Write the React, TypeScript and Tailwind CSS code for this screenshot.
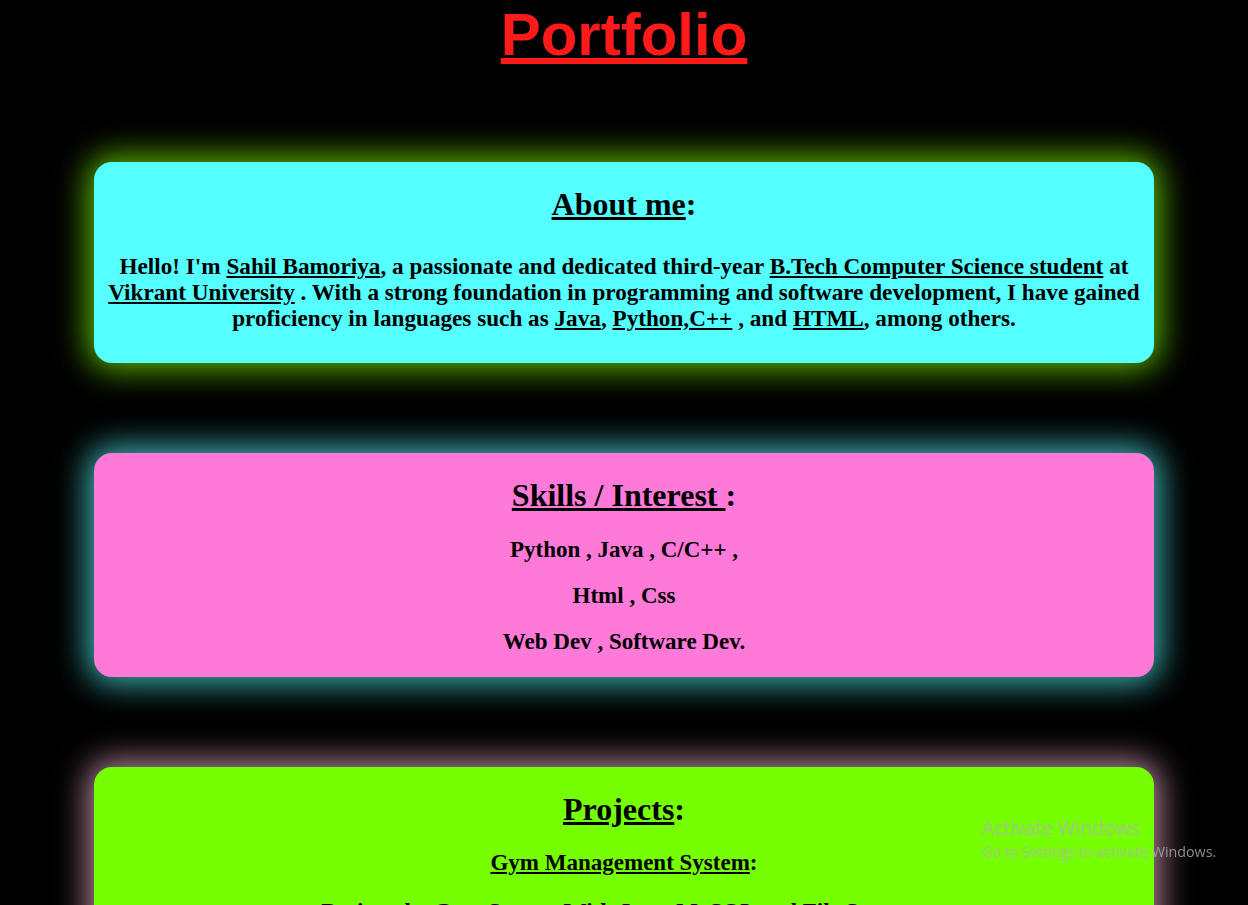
export default function App() {
  return (
    <div className="relative min-h-screen bg-black pb-24 font-['Liberation_Serif','Times_New_Roman',serif] text-black">
      <h1 className="m-0 text-center font-['Liberation_Sans',Arial,sans-serif] text-[60px] font-bold leading-[normal] text-[#ff1a1a] underline">
        Portfolio
      </h1>

      {/* about */}
      <section className="mx-auto mt-[93px] w-[85%] rounded-[18px] bg-[#55ffff] px-[11px] pt-[24px] pb-[32px] text-center shadow-[0_0_32px_6px_#5cb800]">
        <h2 className="m-0 text-[32px] font-bold leading-[normal]">
          <u>About me</u>:
        </h2>
        <p className="mt-[30px] text-[23.2px] font-bold leading-[26px]">
          Hello! I'm <u>Sahil Bamoriya</u>, a passionate and dedicated third-year{" "}
          <u>B.Tech Computer Science student</u> at <u>Vikrant University</u> . With a strong
          foundation in programming and software development, I have gained proficiency in
          languages such as <u>Java</u>, <u>Python,C++</u> , and <u>HTML</u>, among others.
        </p>
      </section>

      {/* skills */}
      <section className="mx-auto mt-[90px] w-[85%] rounded-[18px] bg-[#ff79d8] px-[13px] pt-[24px] pb-[22px] text-center shadow-[0_0_32px_6px_#3fb8b8]">
        <h2 className="m-0 text-[32px] font-bold leading-[normal]">
          <u>Skills / Interest </u>:
        </h2>
        <div className="mt-[23px] flex flex-col gap-[20px] text-[23px] font-bold leading-[26px]">
          <p>Python , Java , C/C++ ,</p>
          <p>Html , Css</p>
          <p>Web Dev , Software Dev.</p>
        </div>
      </section>

      {/* projects */}
      <section className="mx-auto mt-[90px] w-[85%] rounded-[18px] bg-[#76ff03] px-[13px] pt-[24px] pb-[30px] text-center shadow-[0_0_32px_6px_#b8889f]">
        <h2 className="m-0 text-[32px] font-bold leading-[normal]">
          <u>Projects</u>:
        </h2>
        <div className="mt-[22px] flex flex-col gap-[23px] text-[23px] font-bold leading-[26px]">
          <p>
            <u>Gym Management System</u>:
          </p>
          <p>Designed a Gym System With Java, MySQL and File Storage.</p>
        </div>
      </section>

      <div className="pointer-events-none fixed left-[982px] top-[816px] font-['Open_Sans','Noto_Sans',sans-serif] leading-tight text-[rgba(175,175,175,0.8)]">
        <div className="text-[19.2px]">Activate Windows</div>
        <div className="mt-[3px] text-[14.3px]">Go to Settings to activate Windows.</div>
      </div>
    </div>
  );
}
